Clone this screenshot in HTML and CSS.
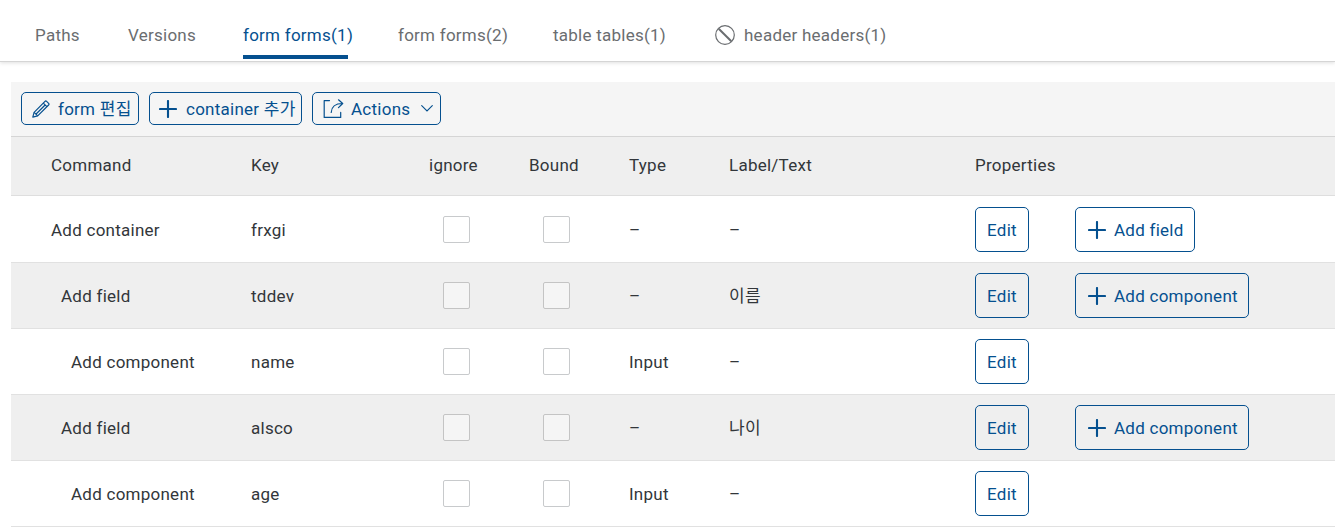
FILE: index.html
```html
<!DOCTYPE html>
<html lang="ko">
<head>
<meta charset="utf-8">
<title>Forms</title>
<link rel="stylesheet" href="styles.css">
</head>
<body>
<svg class="defs" width="0" height="0">
  <symbol id="plus" viewBox="0 0 18 18"><path d="M9 1v16M1 9h16" fill="none" stroke="currentColor" stroke-width="2.1" stroke-linecap="round"/></symbol>
</svg>
<nav class="tabs">
  <a class="tab paths">Paths</a>
  <a class="tab versions">Versions</a>
  <a class="tab form selected">form forms(1)</a>
  <a class="tab form">form forms(2)</a>
  <a class="tab tables">table tables(1)</a>
  <a class="tab headers"><svg class="ban" viewBox="0 0 20 20"><circle cx="10" cy="10" r="9.3" fill="none" stroke="currentColor" stroke-width="1.2"/><path d="M3.7 3.7l12.6 12.6" stroke="currentColor" stroke-width="2"/></svg><span>header headers(1)</span></a>
</nav>
<main class="panel">
  <div class="toolbar">
    <button class="btn edit-form"><svg class="pencil" viewBox="0 0 18 18" fill="none" stroke="currentColor" stroke-width="1.2" stroke-linejoin="round"><path d="M.8 17.2l1.3-4.9L13 1.4q.8-.8 1.6 0l2 2q.8.8 0 1.6L5.7 15.900z"/><path d="M2.100 12.300l3.600 3.600M11.300 3.100l3.600 3.600M13.100 5L4.100 14"/></svg><span>form 편집</span></button>
    <button class="btn add-container"><svg class="plus"><use href="#plus"/></svg><span>container 추가</span></button>
    <button class="btn actions"><svg class="share" viewBox="0 0 21 19" fill="none" stroke="currentColor" stroke-width="1.2" stroke-linecap="round" stroke-linejoin="round"><path d="M6.500 1.600H1.200v16.800h16.500v-5M8.200 13.500C8.500 8 11.500 4.500 19.500 4.500M15.500.800l4.200 3.700-4.200 4.200"/></svg><span>Actions</span><svg class="chevron" viewBox="0 0 12 7"><path d="M.700.700L6 6 11.300.700" fill="none" stroke="currentColor" stroke-width="1.100" stroke-linecap="round"/></svg></button>
  </div>
  <div class="table">
    <div class="row head"><span>Command</span><span>Key</span><span>ignore</span><span>Bound</span><span>Type</span><span>Label/Text</span><span class="wide">Properties</span></div>
    <div class="row first"><span>Add container</span><span>frxgi</span><i class="check"></i><i class="check"></i><span>–</span><span>–</span><button class="btn edit">Edit</button><button class="btn add-field"><svg class="plus"><use href="#plus"/></svg><span>Add field</span></button></div>
    <div class="row shaded"><span class="level-1">Add field</span><span>tddev</span><i class="check"></i><i class="check"></i><span>–</span><span class="ko">이름</span><button class="btn edit">Edit</button><button class="btn add-component"><svg class="plus"><use href="#plus"/></svg><span>Add component</span></button></div>
    <div class="row"><span class="level-2">Add component</span><span>name</span><i class="check"></i><i class="check"></i><span>Input</span><span>–</span><button class="btn edit">Edit</button></div>
    <div class="row shaded"><span class="level-1">Add field</span><span>alsco</span><i class="check"></i><i class="check"></i><span>–</span><span class="ko">나이</span><button class="btn edit">Edit</button><button class="btn add-component"><svg class="plus"><use href="#plus"/></svg><span>Add component</span></button></div>
    <div class="row"><span class="level-2">Add component</span><span>age</span><i class="check"></i><i class="check"></i><span>Input</span><span>–</span><button class="btn edit">Edit</button></div>
  </div>
</main>
</body>
</html>
```
FILE: styles.css
```css
* { box-sizing: border-box; }
body { margin: 0; background: #fff; color: #32363a; font: 17px/22px Roboto, "Noto Sans CJK KR", sans-serif; letter-spacing: .25px; overflow: hidden; }
.defs { display: block; }
.tabs { height: 62px; padding: 11px 0 0 35px; display: flex; gap: 50px; border-bottom: 1px solid #d5d5d5; box-shadow: 0 1px 4px rgba(0,0,0,.13); color: #6a6d70; }
.tab { height: 48px; display: flex; align-items: center; flex: none; white-space: nowrap; }
.paths { width: 43px; }
.versions { width: 65px; }
.form { width: 105px; }
.tables { width: 112px; }
.headers { gap: 9px; }
.selected { color: #0a5295; color: #05508f; border-bottom: 4px solid #05508f; border-radius: 2px 2px 0 0; padding-top: 4px; background: linear-gradient(#fff, #fff) padding-box; }
.ban { width: 20px; height: 20px; }
.panel { margin: 20px 0 0 11px; }
.toolbar { height: 55px; padding: 10px; display: flex; gap: 10px; background: #f5f5f5; border-bottom: 1px solid #d5d5d5; }
.btn { display: flex; align-items: center; margin: 0; padding: 0; height: 33px; background: none; border: 1px solid #05508f; border-radius: 5px; color: #05508f; font: inherit; letter-spacing: inherit; white-space: nowrap; }
.plus { width: 18px; height: 18px; flex: none; }
.edit-form { width: 118px; padding-left: 10px; gap: 8px; }
.pencil { width: 18px; height: 18px; flex: none; }
.add-container { width: 153px; padding-left: 9px; gap: 9px; }
.actions { width: 129px; padding-left: 10px; }
.share { width: 21px; height: 19px; margin-right: 7px; flex: none; }
.chevron { width: 12px; height: 7px; margin-left: 11px; flex: none; }
.row { display: grid; grid-template-columns: 200px 178px 100px 100px 100px 246px 100px 1fr; align-items: center; height: 66px; padding-left: 40px; border-bottom: 1px solid #e1e1e1; }
.head { height: 59px; padding-bottom: 3px; background: #efefef; border-color: #dedede; }
.first { height: 67px; padding-top: 1px; }
.shaded { background: #efefef; }
.wide { grid-column: span 2; }
.level-1 { padding-left: 10px; }
.level-2 { padding-left: 20px; }
.check { width: 27px; height: 27px; margin-left: 14px; border: 1px solid #c8cacc; border-radius: 2px; background: #fff; }
.shaded .check { background: #f5f5f5; border-color: #c4c4c4; }
.table .btn { height: 45px; }
.edit { width: 54px; justify-content: center; }
.add-field, .add-component { padding-left: 12px; gap: 8px; }
.add-field { width: 120px; }
.add-component { width: 174px; }
```
